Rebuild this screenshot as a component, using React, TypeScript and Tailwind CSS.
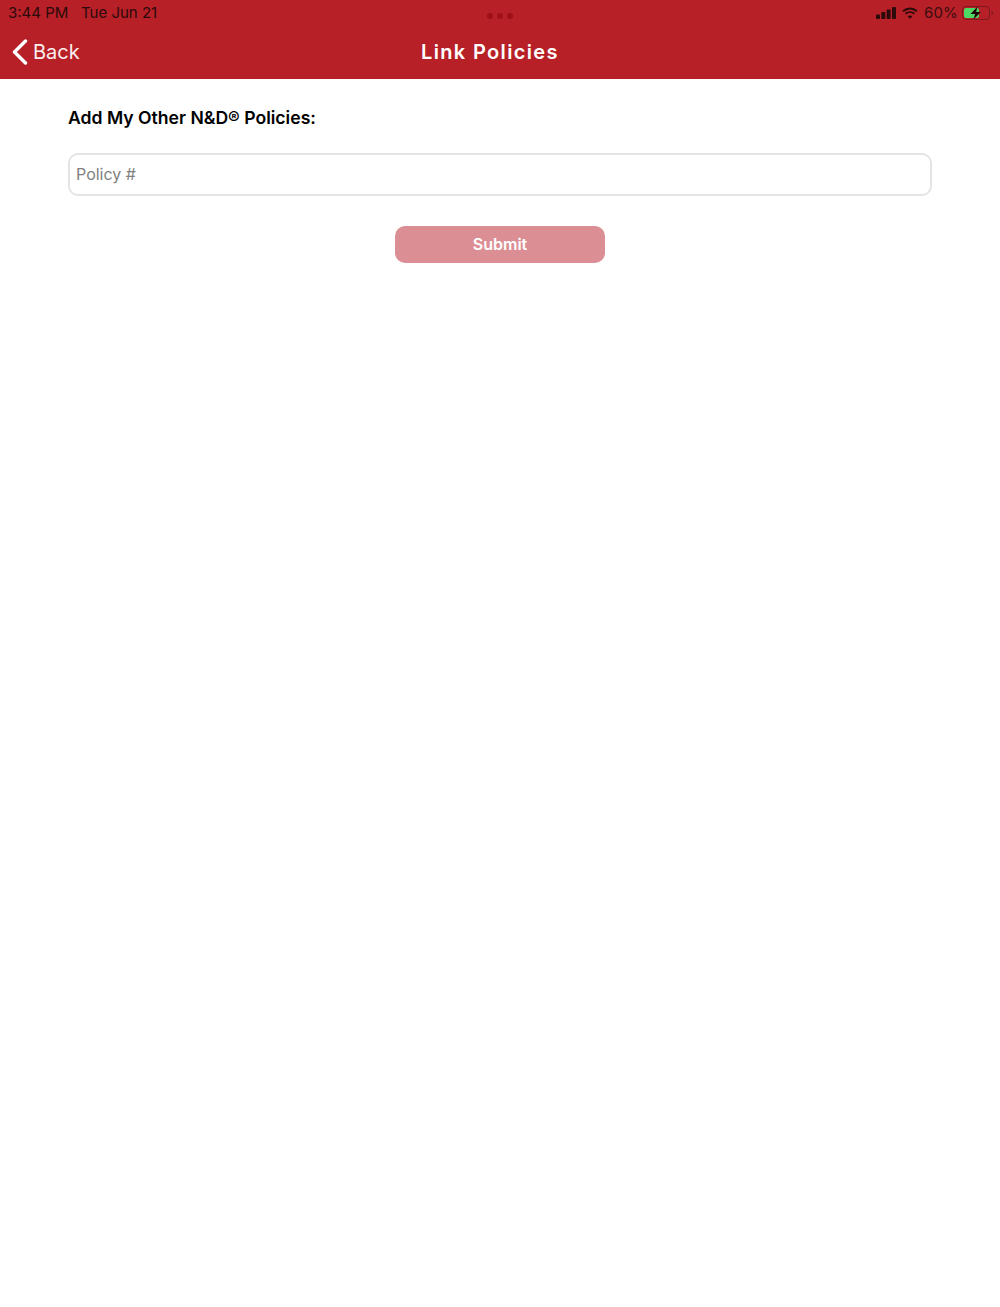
import { useState } from 'react';

const font = 'font-["Inter","Liberation_Sans",sans-serif]';

const StatusIcons = () => (
  <div className="flex items-center">
    <svg width="20" height="12" viewBox="0 0 20 12" className="mr-[6px]" fill="#2b0a0c">
      <rect x="0" y="7.500" width="4" height="4.500" rx="1" />
      <rect x="5.300" y="5" width="4" height="7" rx="1" />
      <rect x="10.600" y="2.500" width="4" height="9.500" rx="1" />
      <rect x="16" y="0" width="4" height="12" rx="1" />
    </svg>
    <svg width="16" height="12" viewBox="0 0 17 13" className="mr-[6px]" fill="none" stroke="#2b0a0c" strokeWidth="2.100">
      <path d="M1 4.600C5.300.6 11.700.6 16 4.600" />
      <path d="M3.700 7.400c2.800-2.500 6.800-2.500 9.600 0" />
      <path d="M8.500 12.800 5.800 10c1.500-1.200 3.900-1.200 5.400 0z" fill="#2b0a0c" stroke="none" />
    </svg>
    <span className="text-[15px] leading-[24px] text-[#3a0d10] mr-[4px] tracking-[0.2px]">60%</span>
    <svg width="32" height="14" viewBox="0 0 32 14">
      <rect x="0.500" y="0.500" width="27" height="13" rx="3.500" fill="none" stroke="#7c1a20" />
      <rect x="2" y="2" width="15" height="10" rx="2" fill="#4cd964" />
      <path d="M29.500 5v4c1-.3 1.600-1 1.600-2s-.6-1.700-1.600-2z" fill="#7c1a20" />
      <path d="M15.500 0.500 8.500 8h4.600l-1.600 5.500L18.800 6h-4.700z" fill="#1f0608" />
    </svg>
  </div>
);

const Header = () => (
  <header className="relative h-[79px] bg-[#b72027] flex flex-col">
    <div className="flex items-center justify-between h-[25px] pl-[8px] pr-[6px]">
      <div className="flex text-[15px] leading-[24px] text-[#2b0a0c]">
        <span className="w-[73px]">3:44 PM</span>
        <span>Tue Jun 21</span>
      </div>
      <StatusIcons />
    </div>
    {/* multitasking dots */}
    <div className="absolute left-[487px] top-[13px] flex gap-[4px]">
      <span className="w-[6px] h-[6px] rounded-full bg-[#a01019]" />
      <span className="w-[6px] h-[6px] rounded-full bg-[#a01019]" />
      <span className="w-[6px] h-[6px] rounded-full bg-[#a01019]" />
    </div>
    <div className="relative flex-1 flex items-center">
      <button className="flex items-center pl-[12px] text-white mt-[-1px]">
        <svg width="16" height="26" viewBox="0 0 16 26" fill="none" stroke="white" strokeWidth="3.400" strokeLinecap="round" strokeLinejoin="round">
          <path d="M13.500 2 2.500 13l11 11" />
        </svg>
        <span className="ml-[5px] text-[20px] leading-[28px] text-[#fbeeee]">Back</span>
      </button>
      <h1 className="absolute left-[421px] top-[14px] text-[20px] leading-[26px] font-semibold tracking-[1.35px] text-white whitespace-nowrap">
        Link Policies
      </h1>
    </div>
  </header>
);

export default function App() {
  const [policy, setPolicy] = useState('');

  return (
    <div className={`${font} min-h-[1307px] bg-white`}>
      <Header />
      <main className="px-[68px] pt-[28px]">
        <h2 className="text-[17.600px] leading-[22px] font-semibold text-black">Add My Other N&amp;D® Policies:</h2>
        <input
          value={policy}
          onChange={(e) => setPolicy(e.target.value)}
          placeholder="Policy #"
          className="block w-full h-[43px] mt-[24px] px-[6px] pb-[1px] rounded-[10px] border-2 border-[#e4e4e4] text-[16px] text-[#555] placeholder:text-[#808080] outline-none"
        />
        <div className="flex justify-center mt-[30px]">
          <button className="w-[210px] h-[37px] pb-[1px] rounded-[10px] bg-[#db8f94] text-white text-[16px] font-semibold">
            Submit
          </button>
        </div>
      </main>
    </div>
  );
}
